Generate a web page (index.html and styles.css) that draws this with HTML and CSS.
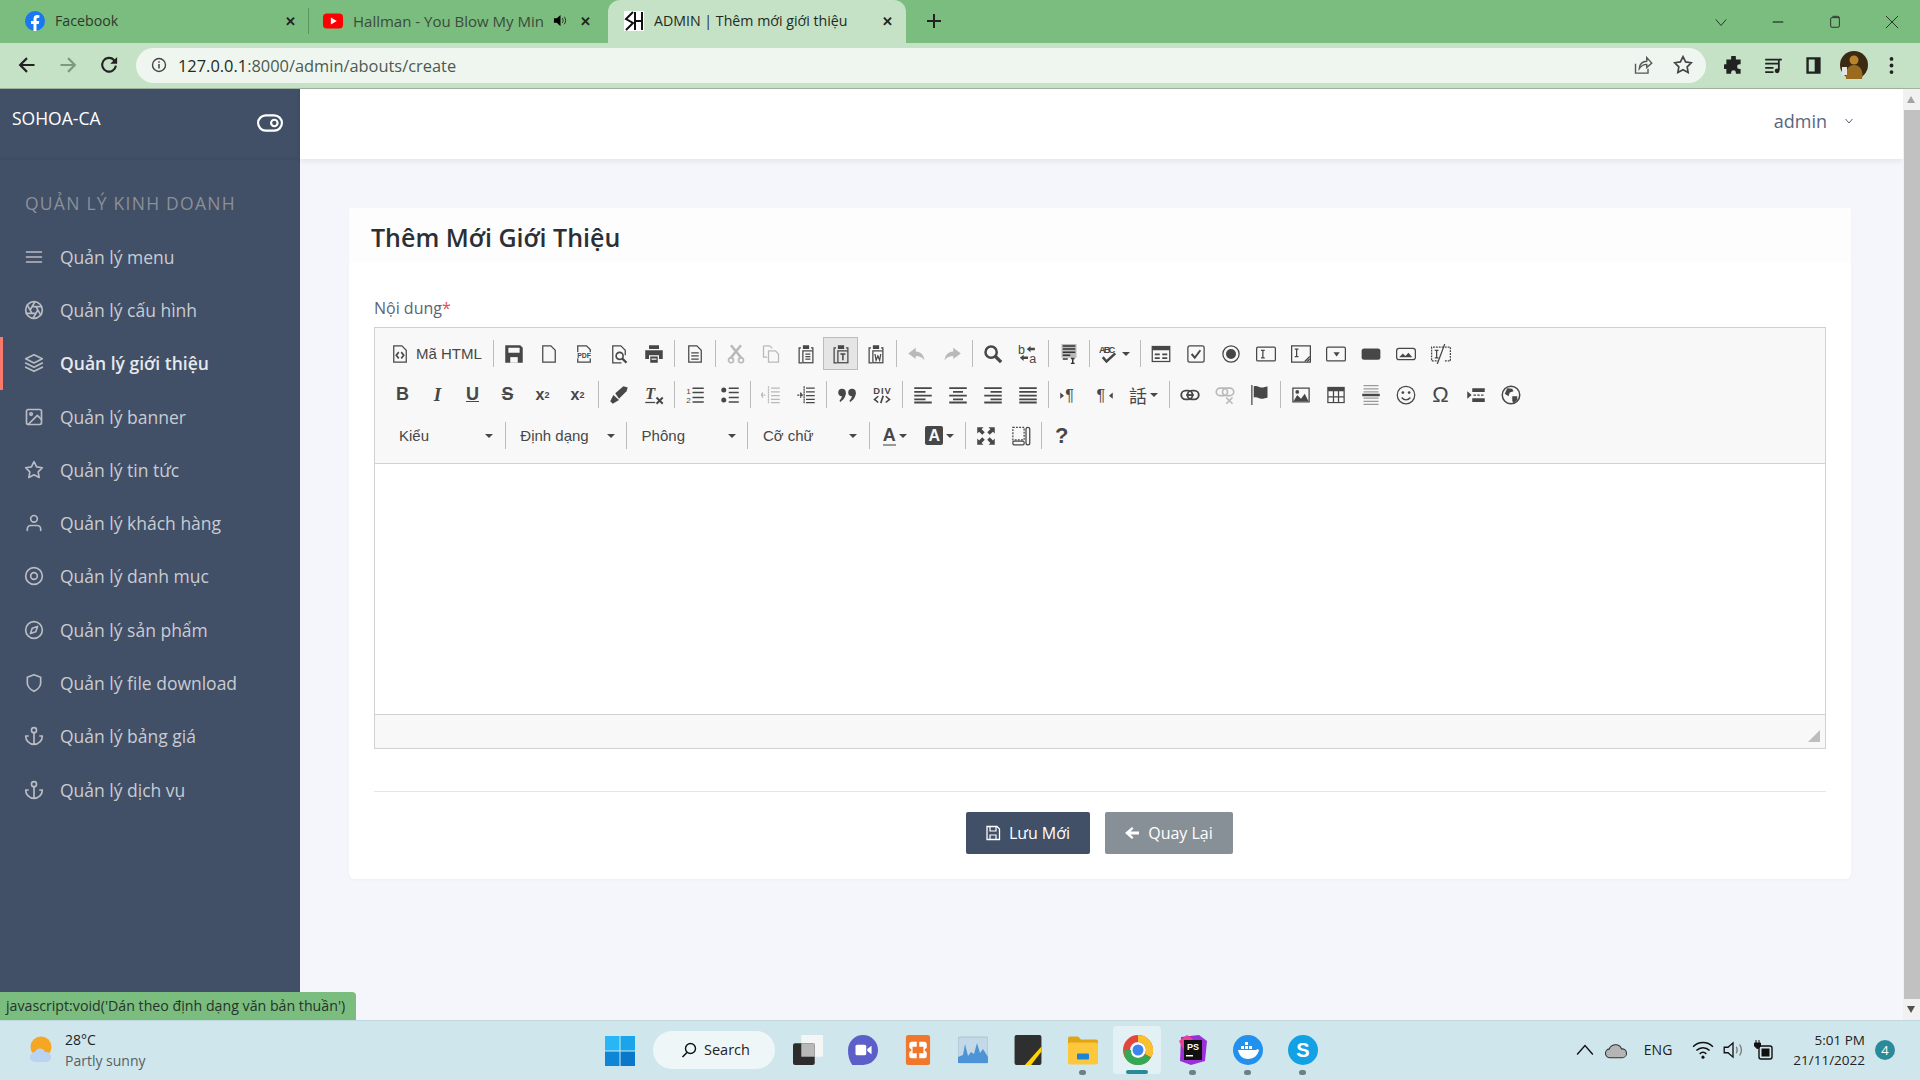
FILE: index.html
```html
<!DOCTYPE HTML>
<html>
	<head>
		<meta charset="utf-8">
		<title>ADMIN | Thêm mới giới thiệu</title>
		<link rel="stylesheet" href="styles.css">
	</head>
	<body>
		<!-- icons used more than once, feather set for sidebar, ck for editor -->
		<svg class="iconDefs">
			<symbol id="fMenu" viewBox="0 0 24 24"><path d="M3 12h18M3 6h18M3 18h18"/></symbol>
			<symbol id="fAperture" viewBox="0 0 24 24"><circle cx="12" cy="12" r="10"/><path d="M14.31 8l5.74 9.94M9.69 8h11.48M7.38 12l5.74-9.94M9.69 16L3.95 6.06M14.31 16H2.83M16.62 12l-5.74 9.94"/></symbol>
			<symbol id="fLayers" viewBox="0 0 24 24"><path d="M12 2L2 7l10 5 10-5zM2 17l10 5 10-5M2 12l10 5 10-5"/></symbol>
			<symbol id="fImage" viewBox="0 0 24 24"><rect x="3" y="3" width="18" height="18" rx="2"/><circle cx="8.5" cy="8.5" r="1.5"/><path d="M21 15l-5-5L5 21"/></symbol>
			<symbol id="fStar" viewBox="0 0 24 24"><path d="M12 2l3.09 6.26L22 9.27l-5 4.87 1.18 6.88L12 17.77l-6.18 3.25L7 14.14 2 9.27l6.91-1.01z"/></symbol>
			<symbol id="fUser" viewBox="0 0 24 24"><path d="M20 21v-2a4 4 0 0 0-4-4H8a4 4 0 0 0-4 4v2"/><circle cx="12" cy="7" r="4"/></symbol>
			<symbol id="fTarget" viewBox="0 0 24 24"><circle cx="12" cy="12" r="10"/><circle cx="12" cy="12" r="4"/></symbol>
			<symbol id="fCompass" viewBox="0 0 24 24"><circle cx="12" cy="12" r="10"/><path d="M16.24 7.76l-2.12 6.36-6.36 2.12 2.12-6.36z"/></symbol>
			<symbol id="fShield" viewBox="0 0 24 24"><path d="M12 22s8-4 8-10V5l-8-3-8 3v7c0 6 8 10 8 10z"/></symbol>
			<symbol id="fAnchor" viewBox="0 0 24 24"><circle cx="12" cy="5" r="3"/><path d="M12 22V8M5 12H2a10 10 0 0 0 20 0h-3"/></symbol>

			<symbol id="cPage" viewBox="0 0 16 16"><path d="M3 1.5h6.5L13 5v9.5H3z" fill="none" stroke="#474747"/></symbol>
			<symbol id="cSource" viewBox="0 0 16 16"><path d="M3 1.5h6.5L13 5v9.5H3z" fill="none" stroke="#474747"/><path d="M7 6.5L5 9l2 2.5M9 6.5L11 9l-2 2.5" fill="none" stroke="#474747" stroke-width="1.3"/></symbol>
			<symbol id="cSave" viewBox="0 0 16 16"><path d="M1 1h12l2 2v12H1z"/><rect x="3.5" y="3" width="9" height="4" fill="#f8f8f8"/><rect x="5" y="10.5" width="6" height="4.5" fill="#f8f8f8"/></symbol>
			<symbol id="cPdf" viewBox="0 0 16 16"><path d="M3 1.5h7L13 4.5v10H3z" fill="none" stroke="#474747"/><rect x="1" y="6.5" width="14" height="5" fill="#f8f8f8"/><text x="8" y="11" font-size="5.5" font-weight="bold" text-anchor="middle" font-family="Liberation Sans">PDF</text></symbol>
			<symbol id="cPreview" viewBox="0 0 16 16"><path d="M10 15H3V1.5h6.5L13 5v4" fill="none" stroke="#474747"/><circle cx="8.5" cy="9.5" r="2.8" fill="none" stroke="#474747" stroke-width="1.3"/><path d="M10.5 11.5L14 15" stroke="#474747" stroke-width="1.8"/></symbol>
			<symbol id="cPrint" viewBox="0 0 16 16"><path d="M4 1h8v3H4zM1 5h14v7h-3V9H4v3H1z"/><path d="M5 10h6v5H5zM6 11.5v1h4v-1z"/></symbol>
			<symbol id="cTemplates" viewBox="0 0 16 16"><path d="M3 1.5h6.5L13 5v9.5H3z" fill="none" stroke="#474747"/><path d="M5 7h6M5 9.5h6M5 12h6" stroke="#474747"/></symbol>
			<symbol id="cCut" viewBox="0 0 16 16"><path d="M4 1l8.5 10.5M12 1L3.5 11.5" stroke="#474747" stroke-width="2" fill="none"/><circle cx="4" cy="13" r="2" fill="none" stroke="#474747" stroke-width="1.3"/><circle cx="12" cy="13" r="2" fill="none" stroke="#474747" stroke-width="1.3"/></symbol>
			<symbol id="cCopy" viewBox="0 0 16 16"><path d="M2 1.5h5L9 3.5M2 1.5v9h3" fill="none" stroke="#474747"/><path d="M6 5.5h5.5L14 8v6.5H6z" fill="none" stroke="#474747"/></symbol>
			<symbol id="cPaste" viewBox="0 0 16 16"><path d="M4 3H2.5v12H5M12 3h1.5v2" fill="none" stroke="#474747"/><path d="M5.5 1h5v3h-5z"/><rect x="5.5" y="5.5" width="8" height="9.5" fill="none" stroke="#474747"/><path d="M7.5 8h4M7.5 10h4M7.5 12h4" stroke="#474747"/></symbol>
			<symbol id="cPasteT" viewBox="0 0 16 16"><path d="M4 3H2.5v12H5M12 3h1.5v2" fill="none" stroke="#474747"/><path d="M5.5 1h5v3h-5z"/><rect x="5.5" y="5.5" width="8" height="9.5" fill="none" stroke="#474747"/><path d="M7.5 8h4M9.5 8v5" stroke="#474747" stroke-width="1.2"/></symbol>
			<symbol id="cPasteW" viewBox="0 0 16 16"><path d="M4 3H2.5v12H5M12 3h1.5v2" fill="none" stroke="#474747"/><path d="M5.5 1h5v3h-5z"/><rect x="5.5" y="5.5" width="8" height="9.5" fill="none" stroke="#474747"/><path d="M7.2 8l.9 5 1.4-3.5 1.4 3.5.9-5" fill="none" stroke="#474747"/></symbol>
			<symbol id="cUndo" viewBox="0 0 16 16"><path d="M7 3L1 7.5 7 12V9.5c3 0 5 .8 7 3.5-.5-4-3-7-7-7z"/></symbol>
			<symbol id="cRedo" viewBox="0 0 16 16"><path d="M9 3l6 4.5L9 12V9.5c-3 0-5 .8-7 3.5 .5-4 3-7 7-7z"/></symbol>
			<symbol id="cFind" viewBox="0 0 16 16"><circle cx="6.5" cy="6.5" r="4.5" fill="none" stroke="#474747" stroke-width="2"/><path d="M10 10l4.5 4.5" stroke="#474747" stroke-width="2.6"/></symbol>
			<symbol id="cReplace" viewBox="0 0 16 16"><text x="0" y="8" font-size="10" font-family="Liberation Sans">b</text><text x="9" y="15.5" font-size="10" font-family="Liberation Sans">a</text><path d="M7 4l3-2.5V3h3.5v2H10v1.5zM8 12H4.5v1.5L1.5 11l3-2.5V10H8z"/></symbol>
			<symbol id="cSelectAll" viewBox="0 0 16 16"><rect x="2" y="0" width="12" height="11" fill="#b9b9b9"/><path d="M3 1.5h10M3 4h10M3 6.5h10M3 9h6M3 12h4M11 11.5v4M9.5 11.5h3M9.5 15.5h3" stroke="#333" stroke-width="1.2"/></symbol>
			<symbol id="cSpell" viewBox="0 0 16 16"><text x="0" y="7" font-size="7.5" font-weight="bold" font-family="Liberation Sans" textLength="13">ABC</text><path d="M3 10.5l3 3.5 7-6.5" fill="none" stroke="#474747" stroke-width="2"/></symbol>
			<symbol id="cForm" viewBox="0 0 16 16"><rect x="1" y="2" width="14" height="12" fill="none" stroke="#474747"/><path d="M1 2h14v3H1z"/><path d="M3 7.5h4V9H3zM9 7.5h4V9H9zM3 10.5h4V12H3zM9 10.5h4V12H9z"/></symbol>
			<symbol id="cCheck" viewBox="0 0 16 16"><rect x="1.5" y="1.5" width="13" height="13" rx="1.5" fill="none" stroke="#474747"/><path d="M4.5 8L7 11l4.500-6" fill="none" stroke="#474747" stroke-width="1.6"/></symbol>
			<symbol id="cRadio" viewBox="0 0 16 16"><circle cx="8" cy="8" r="6.5" fill="none" stroke="#474747"/><circle cx="8" cy="8" r="4"/></symbol>
			<symbol id="cField" viewBox="0 0 16 16"><rect x=".5" y="2.5" width="15" height="11" rx="1" fill="none" stroke="#474747"/><path d="M4 5h3M4 11h3M5.5 5v6" stroke="#474747"/></symbol>
			<symbol id="cArea" viewBox="0 0 16 16"><path d="M.5 1.5h15v13H.5z" fill="none" stroke="#474747"/><path d="M3 4h3M3 10h3M4.5 4v6M11 14l4-4M13 14l2-2" stroke="#474747"/></symbol>
			<symbol id="cSelect" viewBox="0 0 16 16"><rect x=".5" y="2.5" width="15" height="11" rx="1" fill="none" stroke="#474747"/><path d="M6 6.5h5L8.5 10z"/></symbol>
			<symbol id="cButton" viewBox="0 0 16 16"><rect x=".5" y="3.5" width="15" height="9" rx="2"/></symbol>
			<symbol id="cImgBtn" viewBox="0 0 16 16"><rect x=".5" y="3.5" width="15" height="9" rx="2" fill="none" stroke="#474747"/><path d="M2.5 10.5l3-3 2 2L10 7l3 3.500z"/></symbol>
			<symbol id="cHidden" viewBox="0 0 16 16"><path d="M10 2.5H.5v11H6M11 2.5h4.500v11H11" fill="none" stroke="#474747" stroke-dasharray="1.5 .8"/><path d="M3 5h3M3 11h3M4.500 5v6M5 16L11 0" stroke="#474747"/></symbol>
			<symbol id="cBrush" viewBox="0 0 16 16"><path d="M1 13l2.500-5 4.500 4-5 3z"/><path d="M5 6.500L11.500 1 15 2l-1 3-6 6z"/></symbol>
			<symbol id="cRemove" viewBox="0 0 16 16"><text x="1" y="11.5" font-size="13" font-weight="bold" font-style="italic" font-family="Liberation Serif">T</text><path d="M1 14h8" stroke="#474747"/><path d="M10 10l5 5M15 10l-5 5" stroke="#474747" stroke-width="1.5"/></symbol>
			<symbol id="cOl" viewBox="0 0 16 16"><text x="1" y="7" font-size="6.5" font-family="Liberation Sans">1</text><text x="1" y="14" font-size="6.5" font-family="Liberation Sans">2</text><path d="M6 2.5h9M6 6h9M6 10h9M6 13.5h9" stroke="#474747" stroke-width="1.2"/></symbol>
			<symbol id="cUl" viewBox="0 0 16 16"><circle cx="3" cy="4" r="2"/><circle cx="3" cy="12" r="2"/><path d="M7 2.5h8M7 6h8M7 10h8M7 13.5h8" stroke="#474747" stroke-width="1.2"/></symbol>
			<symbol id="cOutdent" viewBox="0 0 16 16"><path d="M8 2.5h7M8 5.5h7M8 8.5h7M8 11.5h7M8 14h7" stroke="#474747"/><path d="M0 8h4M1.5 6L0 8l1.5 2M6 1v14" stroke="#474747" stroke-dasharray="1.5 .5"/></symbol>
			<symbol id="cIndent" viewBox="0 0 16 16"><path d="M8 2.5h7M8 5.5h7M8 8.5h7M8 11.5h7M8 14h7" stroke="#474747"/><path d="M1 8h4M3.5 6L5 8l-1.500 2M6.5 1v14" stroke="#474747" stroke-dasharray="1.5 .5"/></symbol>
			<symbol id="cQuote" viewBox="0 0 16 16"><circle cx="4" cy="6" r="3"/><circle cx="12" cy="6" r="3"/><path d="M7 6c0 4-2 6-4.500 7.500L2 12.500C3 11.500 4 10 4 8zM15 6c0 4-2 6-4.500 7.500l-.5-1c1-1 2-2.500 2-4.500z"/></symbol>
			<symbol id="cDiv" viewBox="0 0 16 16"><text x="8" y="7" font-size="7.5" font-weight="bold" text-anchor="middle" font-family="Liberation Sans" textLength="14">DIV</text><path d="M5 9L2 11.5 5 14M11 9l3 2.5L11 14M9 8.5l-2 6" fill="none" stroke="#474747" stroke-width="1.3"/></symbol>
			<symbol id="cLeft" viewBox="0 0 16 16"><path d="M1 2.5h14M1 5.5h9M1 8.5h14M1 11.5h9M1 14h14" stroke="#474747" stroke-width="1.5"/></symbol>
			<symbol id="cCenter" viewBox="0 0 16 16"><path d="M1 2.5h14M4 5.5h8M1 8.5h14M4 11.5h8M1 14h14" stroke="#474747" stroke-width="1.5"/></symbol>
			<symbol id="cRight" viewBox="0 0 16 16"><path d="M1 2.5h14M6 5.5h9M1 8.5h14M6 11.5h9M1 14h14" stroke="#474747" stroke-width="1.5"/></symbol>
			<symbol id="cJustify" viewBox="0 0 16 16"><path d="M1 2.5h14M1 5.5h14M1 8.5h14M1 11.5h14M1 14h14" stroke="#474747" stroke-width="1.5"/></symbol>
			<symbol id="cLtr" viewBox="0 0 16 16"><path d="M1 6l3 2.5L1 11z"/><text x="5" y="13" font-size="13" font-family="Liberation Sans">¶</text></symbol>
			<symbol id="cRtl" viewBox="0 0 16 16"><path d="M15 6l-3 2.5 3 2.500z"/><text x="2" y="13" font-size="13" font-family="Liberation Sans">¶</text></symbol>
			<symbol id="cLink" viewBox="0 0 16 16"><rect x="1" y="4.5" width="9" height="7" rx="3.5" fill="none" stroke="#474747" stroke-width="1.5"/><rect x="6" y="4.5" width="9" height="7" rx="3.5" fill="none" stroke="#474747" stroke-width="1.5"/><path d="M5 8h6" stroke="#474747" stroke-width="1.5"/></symbol>
			<symbol id="cUnlink" viewBox="0 0 16 16"><rect x="1" y="2.5" width="9" height="6" rx="3" fill="none" stroke="#474747" stroke-width="1.3"/><rect x="6" y="2.5" width="9" height="6" rx="3" fill="none" stroke="#474747" stroke-width="1.3"/><path d="M9 10l5 5M14 10l-5 5" stroke="#474747" stroke-width="1.3"/></symbol>
			<symbol id="cFlag" viewBox="0 0 16 16"><path d="M1.5 0v16" stroke="#474747"/><path d="M3 1c3-1 4 1 6 1s4-.5 5-1v9c-1 .5-3 1-5 1S6 9 3 10z"/></symbol>
			<symbol id="cPicture" viewBox="0 0 16 16"><path d="M1 2h14v12H1z"/><path d="M2 3h12v10H2z" fill="#f8f8f8"/><path d="M2 13l3-5 3 3 3-4 3 6z"/><circle cx="5" cy="5.5" r="1.5"/></symbol>
			<symbol id="cTable" viewBox="0 0 16 16"><path d="M1 1.5h14v13H1z"/><path d="M2 5h3.5v4H2zM6.500 5h3v4h-3zM10.500 5H14v4h-3.500zM2 10h3.500v3.500H2zM6.500 10h3v3.500h-3zM10.500 10H14v3.500h-3.500z" fill="#f8f8f8"/></symbol>
			<symbol id="cRule" viewBox="0 0 16 16"><path d="M2 .5h12M2 3h12M2 5.5h12M2 10.500h12M2 13h12M2 15.500h12" stroke="#9a9a9a"/><path d="M1 8h14" stroke="#474747" stroke-width="2"/></symbol>
			<symbol id="cSmiley" viewBox="0 0 16 16"><circle cx="8" cy="8" r="7" fill="none" stroke="#474747"/><circle cx="5.5" cy="6" r="1.1"/><circle cx="10.5" cy="6" r="1.1"/><path d="M4.5 10c2 2.500 5 2.500 7 0" fill="none" stroke="#474747"/></symbol>
			<symbol id="cBreak" viewBox="0 0 16 16"><path d="M1 5l3.500 3L1 11z"/><path d="M5 2.5h10v3H5zM5 10.500h10v3H5z"/><path d="M6 8h9" stroke="#474747" stroke-dasharray="2 1"/></symbol>
			<symbol id="cGlobe" viewBox="0 0 16 16"><circle cx="8" cy="8" r="7" fill="none" stroke="#474747" stroke-width="1.2"/><path d="M5 2.5l4 .5 1 2-3 1-1 3-3-2zM9 9l4 0 0 3-3 2.500-1-2z"/></symbol>
			<symbol id="cMax" viewBox="0 0 16 16"><path d="M1 1h5L4.500 2.500 7 5 5 7 2.500 4.500 1 6zM15 1v5l-1.500-1.500L11 7 9 5l2.500-2.500L10 1zM1 15v-5l1.500 1.500L5 9l2 2-2.500 2.500L6 15zM15 15h-5l1.500-1.500L9 11l2-2 2.500 2.500L15 10z"/></symbol>
			<symbol id="cBlocks" viewBox="0 0 16 16"><path d="M1.5 1h9v10h-9z" fill="none" stroke="#474747" stroke-dasharray="1.5 1"/><rect x="1.5" y="12" width="9" height="3" rx="1" fill="none" stroke="#474747"/><rect x="12" y="1" width="3" height="14" rx="1.5" fill="none" stroke="#474747"/></symbol>
		</svg>

		<div class="browser">
			<div class="tabStrip">
				<div class="tab">
					<svg class="favicon" viewBox="0 0 16 16"><circle cx="8" cy="8" r="8" fill="#1877f2"/><path d="M11 10.300l.4-2.300H9.200V6.500c0-.6.3-1.200 1.300-1.200h1V3.300s-.9-.2-1.800-.2C7.900 3.100 6.800 4.300 6.800 6.300V8h-2v2.300h2V16h2.400v-5.700z" fill="#fff"/></svg>
					<span class="tabTitle">Facebook</span>
					<span class="tabClose">✕</span>
				</div>
				<div class="tabSep"></div>
				<div class="tab tabYt">
					<svg class="favicon" viewBox="0 0 16 16"><rect x="0" y="2" width="16" height="12" rx="3" fill="#f00"/><path d="M6.300 5.200L11 8l-4.700 2.800z" fill="#fff"/></svg>
					<span class="tabTitle tabFade">Hallman - You Blow My Mind</span>
					<svg class="tabSound" viewBox="0 0 16 16"><path d="M1 5.500h3L8 2v12l-4-3.500H1z"/><path d="M10 5.500c1 1.500 1 3.500 0 5M12 4c2 2.500 2 5.500 0 8" fill="none" stroke="#222"/></svg>
					<span class="tabClose">✕</span>
				</div>
				<div class="tab tabActive">
					<svg class="favicon" viewBox="0 0 20 20"><rect width="20" height="20" fill="#fff"/><path d="M9 1L2 8l7 4-7 7M11 1v18M18 1v18M11 10h7" fill="none" stroke="#111" stroke-width="2"/></svg>
					<span class="tabTitle">ADMIN | Thêm mới giới thiệu</span>
					<span class="tabClose">✕</span>
				</div>
				<svg class="newTab" viewBox="0 0 16 16"><path d="M8 1v14M1 8h14" stroke="#222" stroke-width="2"/></svg>
				<div class="winCtl">
					<svg viewBox="0 0 16 16"><path d="M2 5l6 7 6-7" fill="none" stroke="#222"/></svg>
					<svg viewBox="0 0 16 16"><path d="M2 8h12" stroke="#222" stroke-width="1.3"/></svg>
					<svg viewBox="0 0 16 16"><rect x="3" y="3" width="10" height="11" rx="1.5" fill="none" stroke="#222"/><path d="M5 1.500h6a2 2 0 0 1 2 2" fill="none" stroke="#222"/></svg>
					<svg viewBox="0 0 16 16"><path d="M1 1l14 14M15 1L1 15" stroke="#222"/></svg>
				</div>
			</div>

			<div class="toolBar">
				<svg class="navBtn" viewBox="0 0 16 16"><path d="M14 8H2.500M8 2.500L2.500 8 8 13.500" fill="none" stroke="#222" stroke-width="1.7"/></svg>
				<svg class="navBtn" viewBox="0 0 16 16"><path d="M2 8h11.500M8 2.500L13.500 8 8 13.500" fill="none" stroke="#7d9a80" stroke-width="1.7"/></svg>
				<svg class="navBtn" viewBox="0 0 16 16"><path d="M13.500 8.500A5.500 5.500 0 1 1 12 4l1.500 1.500" fill="none" stroke="#222" stroke-width="1.7"/><path d="M14.500 1.500v5.500H9z" fill="#222"/></svg>
				<div class="addrBar">
					<svg class="addrInfo" viewBox="0 0 16 16"><circle cx="8" cy="8" r="6.5" fill="none" stroke="#444" stroke-width="1.4"/><path d="M8 7v4.500M8 4.300v1.500" stroke="#444" stroke-width="1.5"/></svg>
					<span class="addrUrl"><b>127.0.0.1</b>:8000/admin/abouts/create</span>
					<svg class="addrIcon" viewBox="0 0 16 16"><path d="M2 7v7.500h10V11" fill="none" stroke="#555" stroke-width="1.1"/><path d="M5 11c0-4 3-6 6-6V2l4 4.500L11 10V7.500C8.500 7.500 6.500 8.500 5 11z" fill="none" stroke="#555" stroke-width="1.1"/></svg>
					<svg class="addrIcon" viewBox="0 0 24 24"><path d="M12 2l3.090 6.260L22 9.270l-5 4.870 1.180 6.880L12 17.770l-6.180 3.250L7 14.140 2 9.270l6.910-1.010z" fill="none" stroke="#444" stroke-width="2"/></svg>
				</div>
				<svg class="extBtn" viewBox="0 0 16 16"><path d="M6 1a2 2 0 0 1 4 0v2h4v4h-1a2 2 0 0 0 0 4h1v4h-4v-1a2 2 0 0 0-4 0v1H2v-4H1a2 2 0 0 1 0-4h1V3h4z" fill="#222"/></svg>
				<svg class="extBtn" viewBox="0 0 16 16"><path d="M1 3h11M1 6.500h11M1 10h7M1 13.500h7" stroke="#222" stroke-width="1.5"/><path d="M12.500 3v9" stroke="#222" stroke-width="1.5"/><circle cx="11" cy="12.500" r="2" fill="#222"/><path d="M12 3h3" stroke="#222" stroke-width="1.5"/></svg>
				<svg class="extBtn" viewBox="0 0 16 16"><path d="M2 1h12v14H2zM4 3v10h5V3z" fill="#222" fill-rule="evenodd"/></svg>
				<svg class="avatar" viewBox="0 0 28 28"><circle cx="14" cy="14" r="14" fill="#3a2a12"/><path d="M6 28c-1-8 2-14 8-14s10 6 8 14z" fill="#9a6a1e"/><circle cx="14" cy="9" r="4.500" fill="#b9822c"/><rect x="2" y="16" width="5" height="8" fill="#e4e4e4"/></svg>
				<svg class="extBtn extDots" viewBox="0 0 16 16"><circle cx="8" cy="2.500" r="1.600" fill="#222"/><circle cx="8" cy="8" r="1.600" fill="#222"/><circle cx="8" cy="13.500" r="1.600" fill="#222"/></svg>
			</div>

			<div class="page">
				<div class="sidebar">
					<div class="logoRow">
						<span class="logoText">SOHOA-CA</span>
						<svg class="logoToggle" viewBox="0 0 24 24"><rect x="1" y="5" width="22" height="14" rx="7"/><circle cx="16" cy="12" r="3"/></svg>
					</div>
					<div class="menuTitle">QUẢN LÝ KINH DOANH</div>
					<ul class="menu">
						<li><svg><use href="#fMenu"/></svg>Quản lý menu</li>
						<li><svg><use href="#fAperture"/></svg>Quản lý cấu hình</li>
						<li class="menuActive"><svg><use href="#fLayers"/></svg>Quản lý giới thiệu</li>
						<li><svg><use href="#fImage"/></svg>Quản lý banner</li>
						<li><svg><use href="#fStar"/></svg>Quản lý tin tức</li>
						<li><svg><use href="#fUser"/></svg>Quản lý khách hàng</li>
						<li><svg><use href="#fTarget"/></svg>Quản lý danh mục</li>
						<li><svg><use href="#fCompass"/></svg>Quản lý sản phẩm</li>
						<li><svg><use href="#fShield"/></svg>Quản lý file download</li>
						<li><svg><use href="#fAnchor"/></svg>Quản lý bảng giá</li>
						<li><svg><use href="#fAnchor"/></svg>Quản lý dịch vụ</li>
					</ul>
				</div>

				<div class="content">
					<div class="topBar">
						<span class="userName">admin</span>
						<svg class="userCaret" viewBox="0 0 10 10"><path d="M1.500 3l3.500 4 3.500-4" fill="none" stroke="#5a6580"/></svg>
					</div>
					<div class="main">
						<div class="card">
							<div class="cardHead">Thêm Mới Giới Thiệu</div>
							<div class="cardBody">
								<label class="fieldLabel">Nội dung<span class="req">*</span></label>
								<div class="editor">
									<div class="ckTools">
										<div class="ckRow">
											<span class="ckBtn ckSource"><svg><use href="#cSource"/></svg>Mã HTML</span>
											<i class="ckSep"></i>
											<span class="ckBtn"><svg><use href="#cSave"/></svg></span>
											<span class="ckBtn"><svg><use href="#cPage"/></svg></span>
											<span class="ckBtn"><svg><use href="#cPdf"/></svg></span>
											<span class="ckBtn"><svg><use href="#cPreview"/></svg></span>
											<span class="ckBtn"><svg><use href="#cPrint"/></svg></span>
											<i class="ckSep"></i>
											<span class="ckBtn"><svg><use href="#cTemplates"/></svg></span>
											<i class="ckSep"></i>
											<span class="ckBtn ckOff"><svg><use href="#cCut"/></svg></span>
											<span class="ckBtn ckOff"><svg><use href="#cCopy"/></svg></span>
											<span class="ckBtn"><svg><use href="#cPaste"/></svg></span>
											<span class="ckBtn ckHover"><svg><use href="#cPasteT"/></svg></span>
											<span class="ckBtn"><svg><use href="#cPasteW"/></svg></span>
											<i class="ckSep"></i>
											<span class="ckBtn ckOff"><svg><use href="#cUndo"/></svg></span>
											<span class="ckBtn ckOff"><svg><use href="#cRedo"/></svg></span>
											<i class="ckSep"></i>
											<span class="ckBtn"><svg><use href="#cFind"/></svg></span>
											<span class="ckBtn"><svg><use href="#cReplace"/></svg></span>
											<i class="ckSep"></i>
											<span class="ckBtn"><svg><use href="#cSelectAll"/></svg></span>
											<i class="ckSep"></i>
											<span class="ckBtn ckDrop"><svg><use href="#cSpell"/></svg><b class="ckArrow"></b></span>
											<i class="ckSep"></i>
											<span class="ckBtn"><svg><use href="#cForm"/></svg></span>
											<span class="ckBtn"><svg><use href="#cCheck"/></svg></span>
											<span class="ckBtn"><svg><use href="#cRadio"/></svg></span>
											<span class="ckBtn"><svg><use href="#cField"/></svg></span>
											<span class="ckBtn"><svg><use href="#cArea"/></svg></span>
											<span class="ckBtn"><svg><use href="#cSelect"/></svg></span>
											<span class="ckBtn"><svg><use href="#cButton"/></svg></span>
											<span class="ckBtn"><svg><use href="#cImgBtn"/></svg></span>
											<span class="ckBtn"><svg><use href="#cHidden"/></svg></span>
										</div>
										<div class="ckRow">
											<span class="ckBtn ckLetter ckBold">B</span>
											<span class="ckBtn ckLetter ckItalic">I</span>
											<span class="ckBtn ckLetter"><span class="ckUnder">U</span></span>
											<span class="ckBtn ckLetter"><span class="ckStrike">S</span></span>
											<span class="ckBtn ckLetter ckScript">x<sub>2</sub></span>
											<span class="ckBtn ckLetter ckScript">x<sup>2</sup></span>
											<i class="ckSep"></i>
											<span class="ckBtn"><svg><use href="#cBrush"/></svg></span>
											<span class="ckBtn"><svg><use href="#cRemove"/></svg></span>
											<i class="ckSep"></i>
											<span class="ckBtn"><svg><use href="#cOl"/></svg></span>
											<span class="ckBtn"><svg><use href="#cUl"/></svg></span>
											<i class="ckSep"></i>
											<span class="ckBtn ckOff"><svg><use href="#cOutdent"/></svg></span>
											<span class="ckBtn"><svg><use href="#cIndent"/></svg></span>
											<i class="ckSep"></i>
											<span class="ckBtn"><svg><use href="#cQuote"/></svg></span>
											<span class="ckBtn"><svg><use href="#cDiv"/></svg></span>
											<i class="ckSep"></i>
											<span class="ckBtn"><svg><use href="#cLeft"/></svg></span>
											<span class="ckBtn"><svg><use href="#cCenter"/></svg></span>
											<span class="ckBtn"><svg><use href="#cRight"/></svg></span>
											<span class="ckBtn"><svg><use href="#cJustify"/></svg></span>
											<i class="ckSep"></i>
											<span class="ckBtn"><svg><use href="#cLtr"/></svg></span>
											<span class="ckBtn"><svg><use href="#cRtl"/></svg></span>
											<span class="ckBtn ckDrop ckLang">話<b class="ckArrow"></b></span>
											<i class="ckSep"></i>
											<span class="ckBtn"><svg><use href="#cLink"/></svg></span>
											<span class="ckBtn ckOff"><svg><use href="#cUnlink"/></svg></span>
											<span class="ckBtn"><svg><use href="#cFlag"/></svg></span>
											<i class="ckSep"></i>
											<span class="ckBtn"><svg><use href="#cPicture"/></svg></span>
											<span class="ckBtn"><svg><use href="#cTable"/></svg></span>
											<span class="ckBtn"><svg><use href="#cRule"/></svg></span>
											<span class="ckBtn"><svg><use href="#cSmiley"/></svg></span>
											<span class="ckBtn ckLetter ckOmega">Ω</span>
											<span class="ckBtn"><svg><use href="#cBreak"/></svg></span>
											<span class="ckBtn"><svg><use href="#cGlobe"/></svg></span>
										</div>
										<div class="ckRow ckRow3">
											<span class="ckCombo">Kiểu<b class="ckArrow"></b></span>
											<i class="ckSep"></i>
											<span class="ckCombo">Định dạng<b class="ckArrow"></b></span>
											<i class="ckSep"></i>
											<span class="ckCombo">Phông<b class="ckArrow"></b></span>
											<i class="ckSep"></i>
											<span class="ckCombo">Cỡ chữ<b class="ckArrow"></b></span>
											<i class="ckSep"></i>
											<span class="ckBtn ckDrop ckLetter"><span class="ckColorA">A</span><b class="ckArrow"></b></span>
											<span class="ckBtn ckDrop ckLetter"><span class="ckColorB">A</span><b class="ckArrow"></b></span>
											<i class="ckSep"></i>
											<span class="ckBtn"><svg><use href="#cMax"/></svg></span>
											<span class="ckBtn"><svg><use href="#cBlocks"/></svg></span>
											<i class="ckSep"></i>
											<span class="ckBtn ckLetter ckHelp">?</span>
										</div>
									</div>
									<div class="ckArea"></div>
									<div class="ckFoot"><i class="ckResize"></i></div>
								</div>
								<div class="formActions">
									<span class="btn btnSave">
										<svg viewBox="0 0 16 16"><path d="M2 1.500h10l2.500 2.500v10.500h-12.500z" fill="none" stroke="#fff" stroke-width="1.3"/><path d="M5 2v4h6V2M5 14.500V10h6v4.500" fill="none" stroke="#fff" stroke-width="1.2"/></svg>
										Lưu Mới
									</span>
									<span class="btn btnBack">
										<svg viewBox="0 0 16 16"><path d="M8 2l1.500 1.500L6.500 6.500H15v3H6.500l3 3L8 14 1 8z" fill="#fff"/></svg>
										Quay Lại
									</span>
								</div>
							</div>
						</div>
					</div>
				</div>

				<div class="scrollBar">
					<i class="scrollUp"></i>
					<div class="scrollThumb"></div>
					<i class="scrollDown"></i>
				</div>

				<div class="statusBubble">javascript:void('Dán theo định dạng văn bản thuần')</div>
			</div>

			<div class="taskBar">
				<div class="weather">
					<svg viewBox="0 0 28 28"><circle cx="13" cy="11" r="10.5" fill="#f5a623"/><path d="M7 26a5 5 0 0 1 0-10c1-4 8-5 10 0a5 5 0 0 1 2 10z" fill="#b9d3f2"/></svg>
					<div class="weatherText">
						<span class="weatherTemp">28°C</span>
						<span class="weatherDesc">Partly sunny</span>
					</div>
				</div>
				<div class="taskApps">
					<div class="taskTile">
						<svg class="winLogo" viewBox="0 0 29 29"><rect width="14" height="14" fill="#29b6f6"/><rect x="15" width="14" height="14" fill="#1aa5ea"/><rect y="15" width="14" height="14" fill="#0d86d8"/><rect x="15" y="15" width="14" height="14" fill="#0a78c9"/></svg>
					</div>
					<div class="taskSearch">
						<svg viewBox="0 0 16 16"><circle cx="9.5" cy="6.5" r="5" fill="none" stroke="#111" stroke-width="1.4"/><path d="M6 10.500L1.500 15" stroke="#111" stroke-width="1.6"/></svg>
						Search
					</div>
					<div class="taskTile">
						<svg viewBox="0 0 29 29"><rect x="8" y="0" width="21" height="21" fill="#f4f6f6"/><rect x="0" y="8" width="21" height="21" rx="2" fill="#2c2c2c"/><rect x="8" y="8" width="13" height="13" fill="#b9b9b9"/></svg>
					</div>
					<div class="taskTile">
						<svg viewBox="0 0 28 28"><path d="M14 0a14 14 0 0 1 0 28H9l-5 0C1 24 0 19 0 14A14 14 0 0 1 14 0z" fill="#5b5fc7"/><rect x="7" y="9" width="10" height="10" rx="1.5" fill="#fff"/><path d="M18 13l4-3v8l-4-3z" fill="#fff"/></svg>
					</div>
					<div class="taskTile">
						<svg viewBox="0 0 29 36"><rect width="29" height="36" rx="3" fill="#f0772b"/><path d="M7 8h6v6H8v8h5v6H7a3 3 0 0 1-3-3v-4l3-3-3-3v-4a3 3 0 0 1 3-3zM22 8h-6v6h5v8h-5v6h6a3 3 0 0 0 3-3v-4l-3-3 3-3v-4a3 3 0 0 0-3-3z" fill="#fff"/></svg>
					</div>
					<div class="taskTile">
						<svg viewBox="0 0 30 26"><rect width="30" height="26" rx="2" fill="#c3d9e8" stroke="#8aa" stroke-width=".5"/><path d="M0 20l5-2 2-11 3 12 3-4 3 2 3-11 3 10 3-4 5 8v6H0z" fill="#4d94d6"/></svg>
					</div>
					<div class="taskTile">
						<svg viewBox="0 0 26 29"><rect width="26" height="29" rx="2" fill="#2f2f2f"/><path d="M26 11v5L16 29h-6z" fill="#ffd400"/></svg>
					</div>
					<div class="taskTile tileDot">
						<svg viewBox="0 0 30 29"><path d="M0 3a2 2 0 0 1 2-2h8l3 3h15a2 2 0 0 1 2 2v4H0z" fill="#e1a412"/><rect y="7" width="30" height="22" rx="2" fill="#fcc73c"/><rect x="9" y="18" width="12" height="6" rx="1" fill="#1a84d6"/></svg>
					</div>
					<div class="taskTile tileOpen">
						<svg viewBox="0 0 30 30"><circle cx="15" cy="15" r="11.5" fill="none" stroke="#e5443a" stroke-width="7"/><path d="M15 3.500a11.500 11.500 0 0 1 10 17.200" fill="none" stroke="#fbc02d" stroke-width="7"/><path d="M25 20.700A11.500 11.500 0 0 1 5 20.700L5 15" fill="none" stroke="#35a853" stroke-width="7"/><circle cx="15" cy="15" r="7" fill="#fff"/><circle cx="15" cy="15" r="5.5" fill="#3f83ee"/></svg>
					</div>
					<div class="taskTile tileDot">
						<svg viewBox="0 0 28 30"><path d="M2 2l18-2 8 6-2 20-14 4-11-4z" fill="#9b30d9"/><path d="M0 6l8-6 6 4L4 14z" fill="#ef3f93"/><rect x="5" y="5" width="18" height="20" fill="#111"/><text x="14" y="15" font-size="9" font-weight="bold" fill="#fff" text-anchor="middle" font-family="Liberation Sans">PS</text><rect x="7" y="20" width="7" height="1.5" fill="#fff"/></svg>
					</div>
					<div class="taskTile tileDot">
						<svg viewBox="0 0 30 30"><circle cx="15" cy="15" r="15" fill="#2191ed"/><path d="M5 15h18c1-1 2-1 3 0-1 5-5 9-11 9-6 0-9-4-10-9z" fill="#fff"/><path d="M8 11h3v3H8zM12 11h3v3h-3zM16 11h3v3h-3zM12 7h3v3h-3z" fill="#fff"/></svg>
					</div>
					<div class="taskTile tileDot">
						<svg viewBox="0 0 30 30"><circle cx="15" cy="15" r="15" fill="#12a1e5"/><text x="15" y="22" font-size="20" font-weight="bold" fill="#fff" text-anchor="middle" font-family="Liberation Sans">S</text></svg>
					</div>
				</div>
				<div class="tray">
					<svg class="trayCaret" viewBox="0 0 16 16"><path d="M1 12l7-8 7 8" fill="none" stroke="#111" stroke-width="1.2"/></svg>
					<svg class="trayCloud" viewBox="0 0 20 16"><path d="M5 15a4 4 0 0 1-1-8c1-4 9-6 11 0a4 4 0 0 1 1 8z" fill="#b5b5b5" stroke="#333"/></svg>
					<span class="trayLang">ENG</span>
					<svg class="trayIcon" viewBox="0 0 20 18"><path d="M1 6c5-5 13-5 18 0M4 9.500c3.500-3.500 8.500-3.500 12 0M7 12.500c2-2 4-2 6 0" fill="none" stroke="#111" stroke-width="1.4"/><circle cx="10" cy="15.5" r="1.4" fill="#111"/></svg>
					<svg class="trayIcon" viewBox="0 0 20 18"><path d="M2 6.500h3.500L10 2.500v13l-4.500-4H2z" fill="none" stroke="#111" stroke-width="1.2"/><path d="M13 6c1 2 1 4 0 6M16 4c2 3 2 7 0 10" fill="none" stroke="#777" stroke-width="1.2"/></svg>
					<svg class="trayIcon" viewBox="0 0 20 20"><rect x="6" y="6" width="13" height="13" rx="2" fill="none" stroke="#111" stroke-width="1.4"/><rect x="8.5" y="8.5" width="8" height="8" fill="#111"/><path d="M3 0v3M6 0v3M1.500 3h6v3L4.500 9 1.500 6z" fill="#111" stroke="#111"/></svg>
					<div class="trayClock">
						<span>5:01 PM</span>
						<span>21/11/2022</span>
					</div>
					<span class="trayBadge">4</span>
				</div>
			</div>
		</div>
	</body>
</html>
```

FILE: styles.css
```css
* {
	box-sizing:border-box;
}
html, body {
	margin:0;
	height:100%;
	overflow:hidden;
}
body {
	background-color:white;
	color:#222;
	font-family:"Open Sans", "Noto Sans", sans-serif;
}
.iconDefs {
	display:none;
}
.browser {
	display:flex;
	flex-direction:column;
	height:1080px;
}

/* tabs */
.tabStrip {
	display:flex;
	align-items:stretch;
	height:43px;
	background-color:#7bbd7e;
}
.tab {
	display:flex;
	align-items:center;
	width:308px;
	padding:0 12px 2px 25px;
	font-size:14px;
	color:#2b3a2c;
}
.tabYt {
	width:299px;
	padding-left:14px;
	padding-right:17px;
}
.tabSep {
	width:1px;
	height:26px;
	margin:8px 0 0 0;
	background-color:#5d935f;
}
.tabActive {
	width:298px;
	padding-left:16px;
	padding-right:13px;
	background-color:#c5e1c6;
	border-radius:12px 12px 0 0;
	color:#1f2a20;
}
.favicon {
	width:20px;
	height:20px;
	flex:none;
	margin-right:10px;
}
.tabTitle {
	flex:1;
	font-size:14.2px;
	white-space:nowrap;
	overflow:hidden;
}
.tabFade {
	flex:none;
	width:191px;
	font-size:15px;
	color:#3c4a3d;
}
.tabSound {
	width:15px;
	height:15px;
	margin-left:9px;
	margin-right:12px;
	flex:none;
}
.tabClose {
	font-size:13px;
	font-weight:bold;
	color:#222;
}
.newTab {
	width:16px;
	height:16px;
	margin:13px 0 0 20px;
}
.winCtl {
	display:flex;
	gap:43px;
	align-items:center;
	margin-left:auto;
	padding-right:21px;
}
.winCtl svg {
	width:14px;
	height:14px;
}

/* address row */
.toolBar {
	display:flex;
	align-items:center;
	height:46px;
	padding:0 0 1px 17px;
	background-color:#c5e1c6;
	border-bottom:1px solid #9fb3a0;
}
.navBtn {
	width:20px;
	height:20px;
	margin-right:21px;
}
.addrBar {
	display:flex;
	align-items:center;
	width:1570px;
	height:35px;
	margin-left:-4px;
	padding:0 13px 0 15px;
	background-color:#eff6f0;
	border-radius:18px;
}
.addrInfo {
	width:16px;
	height:16px;
	margin-right:11px;
}
.addrUrl {
	flex:1;
	font-size:16.4px;
	color:#4c5a4e;
}
.addrUrl b {
	font-weight:normal;
	color:#1f2a20;
}
.addrIcon {
	width:20px;
	height:20px;
	margin-left:20px;
}
.extBtn {
	width:19px;
	height:19px;
	margin-left:18px;
	margin-right:3px;
}
.avatar {
	width:28px;
	height:28px;
	margin-left:14px;
}
.extDots {
	margin-left:14px;
}

/* page */
.page {
	position:relative;
	display:flex;
	flex:1;
	min-height:0;
	background-color:#f4f6fb;
}
.sidebar {
	width:300px;
	flex:none;
	background-color:#414f67;
	color:#c9ccd2;
}
.logoRow {
	display:flex;
	align-items:flex-start;
	justify-content:space-between;
	height:69px;
	padding:17px 17px 0 12px;
	color:white;
	box-shadow:0 1px 3px rgba(0,0,0,0.06);
}
.logoText {
	font-size:17.5px;
}
.logoToggle {
	width:26px;
	height:26px;
	margin-top:4px;
	fill:none;
	stroke:white;
	stroke-width:2;
}
.menuTitle {
	margin:33px 0 0 25px;
	height:39px;
	font-size:17.5px;
	line-height:24px;
	letter-spacing:1.25px;
	color:#8b9098;
}
.menu {
	list-style:none;
	margin:0;
	padding:0;
}
.menu li {
	display:flex;
	align-items:center;
	height:53.3px;
	padding-left:24px;
	font-size:17.5px;
}
.menu svg {
	width:20px;
	height:20px;
	margin-right:16px;
	fill:none;
	stroke:#b9bcc3;
	stroke-width:2;
	stroke-linecap:round;
	stroke-linejoin:round;
}
.menuActive {
	border-left:3px solid #f9796c;
	font-weight:600;
	color:#e6e8ec;
}
.menu .menuActive {
	padding-left:21px;
}

.content {
	display:flex;
	flex-direction:column;
	flex:1;
	min-width:0;
}
.topBar {
	display:flex;
	align-items:center;
	justify-content:flex-end;
	height:70px;
	padding:0 46px 6px 0;
	background-color:white;
	box-shadow:0 2px 6px rgba(0,0,0,0.08);
}
.userName {
	font-size:18px;
	color:#5a6580;
}
.userCaret {
	width:10px;
	height:10px;
	margin-left:17px;
	margin-right:3px;
}
.main {
	flex:1;
	padding:49px 52px 0 49px;
}
.card {
	height:671px;
	background-color:white;
	border-radius:6px;
	box-shadow:0 1px 3px rgba(0,0,0,0.03);
}
.cardHead {
	height:54px;
	padding:11px 0 0 22px;
	font-size:25px;
	line-height:36px;
	font-weight:600;
	color:#2b2f36;
	background-color:#fdfdfd;
}
.cardBody {
	padding:0 25px;
}
.fieldLabel {
	display:block;
	height:65px;
	padding-top:34px;
	font-size:16px;
	line-height:24px;
	color:#5b6573;
}
.req {
	color:#d9534f;
}

/* editor */
.editor {
	height:422px;
	display:flex;
	flex-direction:column;
	border:1px solid #d1d1d1;
}
.ckTools {
	height:136px;
	padding:9px 0 0 10px;
	background-color:#f8f8f8;
	border-bottom:1px solid #d1d1d1;
}
.ckRow {
	display:flex;
	height:33px;
	margin-bottom:8px;
}
.ckRow3 {
	padding-left:2px;
}
.ckBtn {
	display:flex;
	align-items:center;
	justify-content:center;
	width:35px;
	height:33px;
	flex:none;
	color:#474747;
}
.ckBtn svg {
	width:20px;
	height:20px;
	fill:#474747;
}
.ckSource {
	width:105px;
	justify-content:flex-start;
	padding-left:5px;
	font:15px "Liberation Sans", sans-serif;
}
.ckSource svg {
	margin-right:6px;
}
.ckOff {
	opacity:0.35;
}
.ckHover {
	background-color:#e5e5e5;
	border:1px solid #bcbcbc;
}
.ckDrop {
	width:45px;
}
.ckLang {
	font:18px "Noto Sans CJK TC", sans-serif;
}
.ckArrow {
	display:inline-block;
	width:0;
	height:0;
	margin-left:3px;
	border-top:4px solid #474747;
	border-left:4px solid transparent;
	border-right:4px solid transparent;
}
.ckSep {
	display:block;
	width:6px;
	height:33px;
	flex:none;
	background:linear-gradient(#bcbcbc,#bcbcbc) center / 1px 27px no-repeat;
}
.ckLetter {
	font:bold 18px "Liberation Sans", sans-serif;
}
.ckItalic {
	font:bold italic 19px "Liberation Serif", serif;
}
.ckUnder {
	text-decoration:underline;
}
.ckStrike {
	text-decoration:line-through;
}
.ckScript {
	font-size:16px;
}
.ckScript sub, .ckScript sup {
	font-size:9px;
}
.ckOmega {
	font-size:22px;
	font-weight:normal;
}
.ckHelp {
	font-size:22px;
}
.ckColorA {
	border-bottom:2px solid #999;
	line-height:18px;
}
.ckColorB {
	padding:0 3px;
	background-color:#474747;
	color:#f8f8f8;
	border-radius:2px;
	line-height:19px;
	font-size:16px;
}
.ckCombo {
	display:flex;
	align-items:center;
	justify-content:space-between;
	width:115.3px;
	height:33px;
	flex:none;
	padding:0 9px 0 12px;
	font:15px "Liberation Sans", sans-serif;
	color:#474747;
}
.ckArea {
	flex:1;
	background-color:white;
}
.ckFoot {
	position:relative;
	height:34px;
	background-color:#f8f8f8;
	border-top:1px solid #d1d1d1;
}
.ckResize {
	position:absolute;
	right:5px;
	bottom:6px;
	width:0;
	height:0;
	border-bottom:12px solid #bdbdbd;
	border-left:12px solid transparent;
}
.formActions {
	display:flex;
	justify-content:center;
	gap:15px;
	margin-top:42px;
	padding-top:20px;
	padding-right:2px;
	border-top:1px solid #e6e6e6;
}
.btn {
	display:flex;
	align-items:center;
	justify-content:center;
	gap:8px;
	height:42px;
	font-size:16px;
	color:white;
	border-radius:2px;
}
.btn svg {
	width:16px;
	height:16px;
}
.btnSave {
	width:124px;
	background-color:#414f67;
}
.btnBack {
	width:128px;
	background-color:#889097;
}

/* scrollbar */
.scrollBar {
	display:flex;
	flex-direction:column;
	width:17px;
	flex:none;
	background-color:#f1f1f1;
}
.scrollThumb {
	flex:1;
	margin-left:1px;
	background-color:#c1c1c1;
}
.scrollUp, .scrollDown {
	position:relative;
	display:block;
	height:21px;
	flex:none;
}
.scrollUp:after, .scrollDown:after {
	content:"";
	position:absolute;
	left:4px;
	top:7px;
	border-left:4.5px solid transparent;
	border-right:4.5px solid transparent;
}
.scrollUp:after {
	border-bottom:7px solid #a3a3a3;
}
.scrollDown:after {
	border-top:7px solid #505050;
}
.statusBubble {
	position:absolute;
	left:0;
	bottom:0;
	width:356px;
	height:28px;
	padding-left:6px;
	font-size:14.2px;
	line-height:28px;
	white-space:nowrap;
	color:#26332a;
	background-color:#7bbd7e;
	border-top-right-radius:4px;
}

/* windows taskbar */
.taskBar {
	display:flex;
	align-items:center;
	height:60px;
	flex:none;
	padding-bottom:2px;
	background-color:#cfe7ec;
	border-top:1px solid #bfd9de;
}
.weather {
	display:flex;
	align-items:center;
	width:592px;
	flex:none;
	padding-left:28px;
}
.weather svg {
	width:28px;
	height:28px;
	margin-right:9px;
}
.weatherText {
	display:flex;
	flex-direction:column;
	font-size:14px;
	line-height:21px;
}
.weatherDesc {
	color:#555f63;
}
.taskApps {
	display:flex;
	align-items:center;
	height:100%;
}
.taskTile {
	position:relative;
	display:flex;
	align-items:center;
	justify-content:center;
	width:55px;
	height:48px;
}
.taskTile svg {
	width:30px;
	height:30px;
}
.winLogo {
	margin-top:2px;
}
.taskSearch {
	display:flex;
	align-items:center;
	gap:7px;
	width:122px;
	height:38px;
	margin:0 5px 0 6px;
	padding-left:28px;
	font-size:14.5px;
	background-color:#eff6f8;
	border-radius:19px;
}
.taskSearch svg {
	width:16px;
	height:18px;
}
.tileDot:after {
	content:"";
	position:absolute;
	left:24px;
	bottom:-1px;
	width:7px;
	height:5px;
	background-color:#6f7f84;
	border-radius:3px;
}
.tileOpen:before {
	content:"";
	position:absolute;
	left:3px;
	top:0;
	width:48px;
	height:48px;
	background-color:#e4f1f4;
	border-radius:4px;
}
.tileOpen svg {
	position:relative;
}
.tileOpen:after {
	content:"";
	position:absolute;
	left:16px;
	bottom:0;
	width:22px;
	height:4px;
	background-color:#2a8a9a;
	border-radius:2px;
}
.tray {
	display:flex;
	align-items:center;
	margin-left:auto;
	padding-right:25px;
	font-size:14px;
}
.trayCaret {
	width:18px;
	height:18px;
	margin-right:11px;
}
.trayCloud {
	width:22px;
	height:18px;
	margin-right:17px;
}
.trayLang {
	margin-right:20px;
}
.trayIcon {
	width:22px;
	height:20px;
	margin-right:8px;
}
.trayClock {
	display:flex;
	flex-direction:column;
	align-items:flex-end;
	margin-left:11px;
	font-size:13.5px;
	line-height:20px;
}
.trayBadge {
	width:20px;
	height:20px;
	margin-left:10px;
	text-align:center;
	line-height:20px;
	font-size:13px;
	color:white;
	background-color:#2a8a9a;
	border-radius:50%;
}
```
